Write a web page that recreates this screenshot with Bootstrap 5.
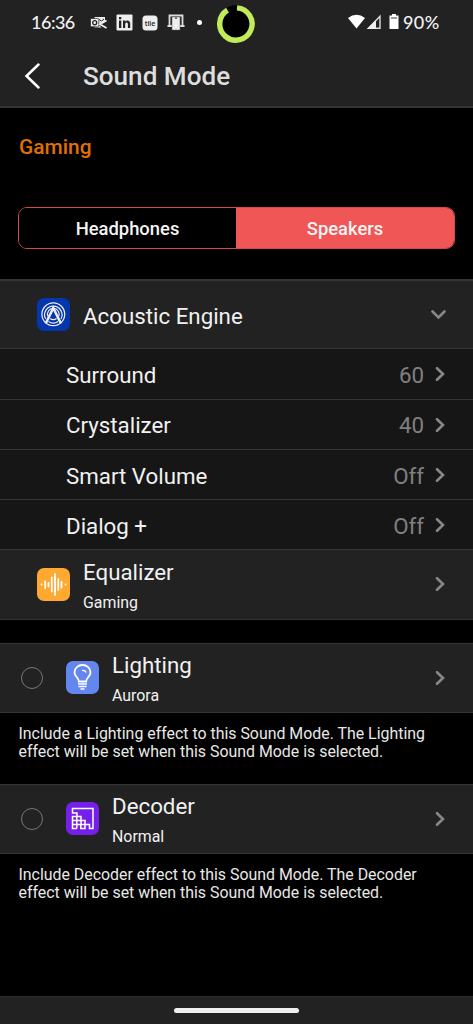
<!DOCTYPE html>
<html lang="en">
<head>
<meta charset="utf-8">
<meta name="viewport" content="width=device-width, initial-scale=1">
<title>Sound Mode</title>
<link href="https://cdn.jsdelivr.net/npm/bootstrap@5.3.0/dist/css/bootstrap.min.css" rel="stylesheet">
<style>
html,body{height:100%}
body{background:#000;color:#f1f1f1;font-family:Roboto,sans-serif;overflow:hidden}
svg{display:block;flex:none}
.screen{height:1024px}
.statusbar{height:45px;padding-left:31px}
.statusbar,.titlebar,.homebar{background:#222}
.clock,.pct{font:500 18px/20px Lato,sans-serif;margin-top:-2px}
.clock{width:46px;letter-spacing:-.5px}
.pct{margin-left:4px;letter-spacing:.4px}
.ico-mail{margin-left:13px}
.ico-in{margin-left:8px}
.ico-tile{margin-left:9px}
.ico-cast{margin-left:8px}
.dot{width:5px;height:5px;margin-left:11px}
.cam{margin-left:15px}
.signals{margin-left:93px}
.titlebar{height:63px;border-bottom:2px solid #343434;padding-left:24px}
.titlebar h1{font-size:26.1px;line-height:30px;font-weight:500;color:#ddd;margin:0 0 0 42px}
.mode-name{height:99px;padding:26px 0 0 19px;font-size:20.9px;line-height:26px;font-weight:500;color:#e07000}
.seg{height:42px;margin:0 18px;border:1px solid #d34a4a;border-radius:9px;overflow:hidden}
.seg button{border:0;padding:2px 0 0;width:217px;background:#000;color:#f4f4f4;font-size:18.4px;font-weight:500}
.seg .on{background:#f05656;flex:1}
.rows{background:#222;border-top:1px solid #363636;border-bottom:1px solid #363636}
.rows.first{border-top-width:2px;margin-top:30px}
.rows.first .entry:first-child{height:67.4px}
.rows.first .entry:last-child{height:69.4px}
.rows.next{margin-top:23px}
.entry{height:68px;padding:0 27px 0 37px}
.entry.pick{padding-left:21px}
.labels{padding:2px 0 0 13px}
.entry .ttl{font-size:22.3px;line-height:28px}
.entry .sub{font-size:15.9px;line-height:20px;margin-top:7px;margin-bottom:1px}
.rows.first .entry:last-child .labels{padding-top:4px}
.param{height:50.2px;background:#161616;border-top:1px solid #363636;padding:1px 27px 0 66px;font-size:22.3px}
.param span{padding-top:3px}
.param .val{color:#808080;margin-left:auto;margin-right:10px}
.param+.entry{border-top:1px solid #363636}
.ring{width:22px;height:22px;border:1px solid #777;border-radius:50%;margin-right:23px}
.note{padding:12px 18px 0 18.5px;font-size:15.9px;line-height:18.2px;color:#e8e8e8;margin:0;white-space:nowrap}
.homebar{height:28px;border-top:1px solid #2b2b2b}
.pill{width:125px;height:5px;border-radius:3px;background:#eee}
</style>
</head>
<body>
<svg width="0" height="0" class="position-absolute"><symbol id="chev" viewBox="0 0 12 16"><path fill="none" stroke="#888" stroke-width="2.600" stroke-linecap="round" d="M3 2.200L9 8l-6 5.800"/></symbol></svg>
<div class="screen d-flex flex-column">
<header>
<div class="statusbar d-flex align-items-center">
<span class="clock">16:36</span>
<svg class="ico-mail" width="18" height="14" viewBox="0 0 18 14"><path fill="#eee" d="M4.500 1H15v4.500L9.500 8l2 3.500h-7z"/><path fill="none" stroke="#222" stroke-width="1" d="M9 3.500l2.500 1.500L14 3"/><rect x=".5" y="2.500" width="8.300" height="8.300" rx="1" fill="#eee" stroke="#222" stroke-width=".7"/><ellipse cx="4.700" cy="6.700" rx="2" ry="2.100" fill="none" stroke="#222" stroke-width="1.300"/><path fill="none" stroke="#222" stroke-width="3.500" d="M10 8.300l7 3.700"/><path fill="none" stroke="#eee" stroke-width="1.700" d="M16.500 4.500L10 8.300l6.500 3.700"/></svg>
<svg class="ico-in" width="17" height="17" viewBox="0 0 17 17"><rect x=".5" y=".5" width="16" height="16" rx="1" fill="#eee"/><path fill="#222" d="M3 6.500h2.300V14H3zM3 3h2.300v2.200H3zM7 6.500h2.200v1c1.200-1.700 5-1.600 5 2V14h-2.300v-3.800c0-2.300-2.700-2.100-2.700 0V14H7z"/></svg>
<svg class="ico-tile" width="16" height="16" viewBox="0 0 16 16"><rect x=".5" y=".5" width="15" height="15" rx="3.500" fill="#eee"/><text x="8" y="10.500" text-anchor="middle" font-family="Open Sans" font-size="7" font-weight="600" fill="#222">tile</text></svg>
<svg class="ico-cast" width="20" height="17" viewBox="0 0 20 17"><path fill="none" stroke="#ddd" stroke-width="1.800" d="M3.500 11V1.500h13V11M1.500 12h5m7 0h5"/><path fill="#eee" stroke="#555" stroke-width=".5" d="M6 3h8v13H6z"/><path stroke="#222" d="M9 4.200h2"/></svg>
<span class="dot rounded-circle bg-white"></span>
<svg class="cam" width="38" height="40" viewBox="0 0 38 40"><circle cx="19" cy="21" r="18.800" fill="#000"/><path fill="none" stroke="#c2eb5a" stroke-width="5.400" d="M20 4.830A16.200 16.200 0 1 1 10.500 7.150"/></svg>
<svg class="signals" width="51" height="17" viewBox="0 0 51 17"><path fill="#fff" d="M0 4Q8.500-2.500 17 4L8.500 14.500z"/><path fill="none" stroke="#ddd" stroke-width="1.400" d="M20.500 14.300L32 2.300v12z"/><path fill="#eee" d="M19 15L28 6v9z"/><path fill="#fff" d="M44 0h4v1.500h2.500V15h-9V1.500H44z"/><path stroke="#222" stroke-width=".9" d="M43 4h6"/></svg>
<span class="pct">90%</span>
</div>
<nav class="titlebar d-flex align-items-center" aria-label="Title">
<svg width="17" height="28" viewBox="0 0 17 28"><path fill="none" stroke="#fff" stroke-width="2.500" stroke-linecap="round" d="M14.500 2.500L2.500 14l12 11.500"/></svg>
<h1>Sound Mode</h1>
</nav>
</header>
<main class="flex-grow-1">
<div class="mode-name">Gaming</div>
<div class="seg d-flex"><button>Headphones</button><button class="on">Speakers</button></div>
<section class="rows first">
<div class="entry d-flex align-items-center">
<svg width="33" height="33" viewBox="0 0 33 33"><rect width="33" height="33" rx="7" fill="#0536ae"/><g fill="none" stroke="#eee" stroke-width="1.200"><circle cx="16.300" cy="16.300" r="11.400"/><path d="M8.700 21A8.700 8.700 0 1 1 23.900 21M11 18.500a5.800 5.800 0 1 1 10.600 0M11.500 23.500q4.800 3.300 9.600 0M13 20.500q3.300 2.300 6.600 0"/><path stroke-width="2.500" d="M8.700 25.500L16.300 10l7.600 15.500"/></g></svg>
<div class="labels flex-grow-1"><div class="ttl">Acoustic Engine</div></div>
<svg width="15" height="12" viewBox="0 0 15 12"><path fill="none" stroke="#888" stroke-width="2.600" stroke-linecap="round" d="M1.500 2.500l6 6 6-6"/></svg>
</div>
<div class="param d-flex align-items-center"><span>Surround</span><span class="val">60</span><svg width="12" height="16"><use href="#chev"/></svg></div>
<div class="param d-flex align-items-center"><span>Crystalizer</span><span class="val">40</span><svg width="12" height="16"><use href="#chev"/></svg></div>
<div class="param d-flex align-items-center"><span>Smart Volume</span><span class="val">Off</span><svg width="12" height="16"><use href="#chev"/></svg></div>
<div class="param d-flex align-items-center"><span>Dialog +</span><span class="val">Off</span><svg width="12" height="16"><use href="#chev"/></svg></div>
<div class="entry d-flex align-items-center">
<svg width="33" height="33" viewBox="0 0 33 33"><rect width="33" height="33" rx="7" fill="#ffa931"/><path stroke="#fff" stroke-width="1.800" stroke-linecap="round" d="M4.500 16.500h.1M8.200 13.500v6.500M11.500 15v3.500M14.800 9.500v14M18 6v21M21.300 11v11M24.500 14v5.500M28.500 16.500h.1"/></svg>
<div class="labels flex-grow-1"><div class="ttl">Equalizer</div><div class="sub">Gaming</div></div>
<svg width="12" height="16"><use href="#chev"/></svg>
</div>
</section>
<section class="rows next">
<div class="entry pick d-flex align-items-center">
<span class="ring"></span>
<svg width="33" height="33" viewBox="0 0 33 33"><rect width="33" height="33" rx="7" fill="#6387ee"/><path fill="none" stroke="#fff" stroke-width="1.800" d="M12.800 20.500c0-4-4.300-5-4.300-9a8 7.500 0 0 1 16 0c0 4-4.300 5-4.300 9z"/><path fill="none" stroke="#fff" stroke-width="1.300" d="M16 9.500q3-.5 4.200 2"/><path stroke="#fff" stroke-width="1.700" d="M12 23h9M12.500 25.500h8M14.500 28h4"/></svg>
<div class="labels flex-grow-1"><div class="ttl">Lighting</div><div class="sub">Aurora</div></div>
<svg width="12" height="16"><use href="#chev"/></svg>
</div>
</section>
<p class="note">Include a Lighting effect to this Sound Mode. The Lighting<br>effect will be set when this Sound Mode is selected.</p>
<section class="rows next">
<div class="entry pick d-flex align-items-center">
<span class="ring"></span>
<svg width="33" height="33" viewBox="0 0 33 33"><rect width="33" height="33" rx="7" fill="#771fea"/><path fill="none" stroke="#fff" stroke-width="1.500" d="M6.500 11V6.500H27v20h-3.500V22.500H19v-4h-4v-4h-4V11zM6.500 14.500H15V22.500H6.500zM10.800 14.500v12M6.500 18.500h12.500v8h-4.200v-4M6.500 22.500v4h4.300M15 22.500h4"/></svg>
<div class="labels flex-grow-1"><div class="ttl">Decoder</div><div class="sub">Normal</div></div>
<svg width="12" height="16"><use href="#chev"/></svg>
</div>
</section>
<p class="note">Include Decoder effect to this Sound Mode. The Decoder<br>effect will be set when this Sound Mode is selected.</p>
</main>
<footer class="homebar d-flex align-items-center justify-content-center"><span class="pill"></span></footer>
</div>
<script src="https://cdn.jsdelivr.net/npm/bootstrap@5.3.0/dist/js/bootstrap.bundle.min.js"></script>
</body>
</html>
